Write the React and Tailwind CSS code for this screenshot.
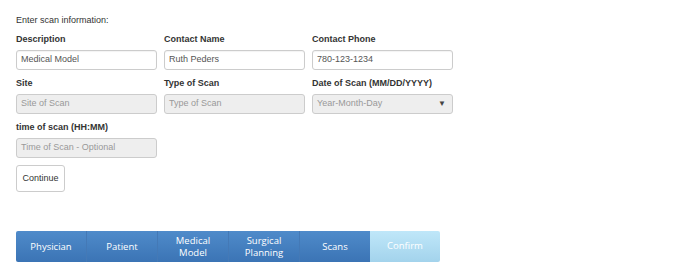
import React from "react";

const steps = [
  { label: ["Physician"] },
  { label: ["Patient"] },
  { label: ["Medical", "Model"] },
  { label: ["Surgical", "Planning"] },
  { label: ["Scans"] },
];

function Field({ label, value, placeholder, disabled, select }) {
  return (
    <div className="flex flex-col">
      <div className="h-4 leading-4 font-bold text-[9px] text-[#333] whitespace-nowrap">{label}</div>
      <div
        className={
          "mt-[3px] h-[20px] rounded-[3px] border border-[#ccc] pl-[4px] pr-[6px] flex items-center text-[9px] " +
          (disabled ? "bg-[#eeeeee] text-[#999]" : "bg-white text-[#555] shadow-[inset_0_1px_1px_rgba(0,0,0,0.05)]")
        }
      >
        <span className="flex-1">{value || placeholder}</span>
        {select && <span className="text-[8px] text-[#444]">▼</span>}
      </div>
    </div>
  );
}

export default function App() {
  return (
    <div
      className="w-[700px] h-[280px] bg-white pl-4 pt-[12px]"
      style={{ fontFamily: '"Liberation Sans", Arial, sans-serif' }}
    >
      <div className="h-4 leading-4 text-[9px] text-[#333]">Enter scan information:</div>
      <div className="mt-[3px] grid grid-cols-[141px_141px_141px] gap-x-[7px] gap-y-[5px]">
        <Field label="Description" value="Medical Model" />
        <Field label="Contact Name" value="Ruth Peders" />
        <Field label="Contact Phone" value="780-123-1234" />
        <Field label="Site" placeholder="Site of Scan" disabled />
        <Field label="Type of Scan" placeholder="Type of Scan" disabled />
        <Field label="Date of Scan (MM/DD/YYYY)" placeholder="Year-Month-Day" disabled select />
        <Field label="time of scan (HH:MM)" placeholder="Time of Scan - Optional" disabled />
      </div>
      <button className="mt-[7px] h-[27px] w-[49px] rounded-[3px] border border-[#ccc] bg-white text-[9px] text-[#333]">
        Continue
      </button>
      <div
        className="mt-[39px] flex w-[424px] h-[31px] rounded-[2px] overflow-hidden"
        style={{ fontFamily: '"Open Sans", sans-serif' }}
      >
        {steps.map((s, i) => (
          <div
            key={i}
            className={
              "flex-1 flex flex-col items-center justify-center text-white text-[9.5px] leading-[12px] bg-gradient-to-b from-[#4f8bca] to-[#3b74b5] " +
              (i > 0 ? "border-l border-[#4479b6]" : "")
            }
          >
            {s.label.map((l) => (
              <span key={l}>{l}</span>
            ))}
          </div>
        ))}
        <div className="flex-1 flex items-center justify-center text-white text-[9.5px] bg-gradient-to-b from-[#bfe7f9] to-[#a3d3ec]">
          Confirm
        </div>
      </div>
    </div>
  );
}
